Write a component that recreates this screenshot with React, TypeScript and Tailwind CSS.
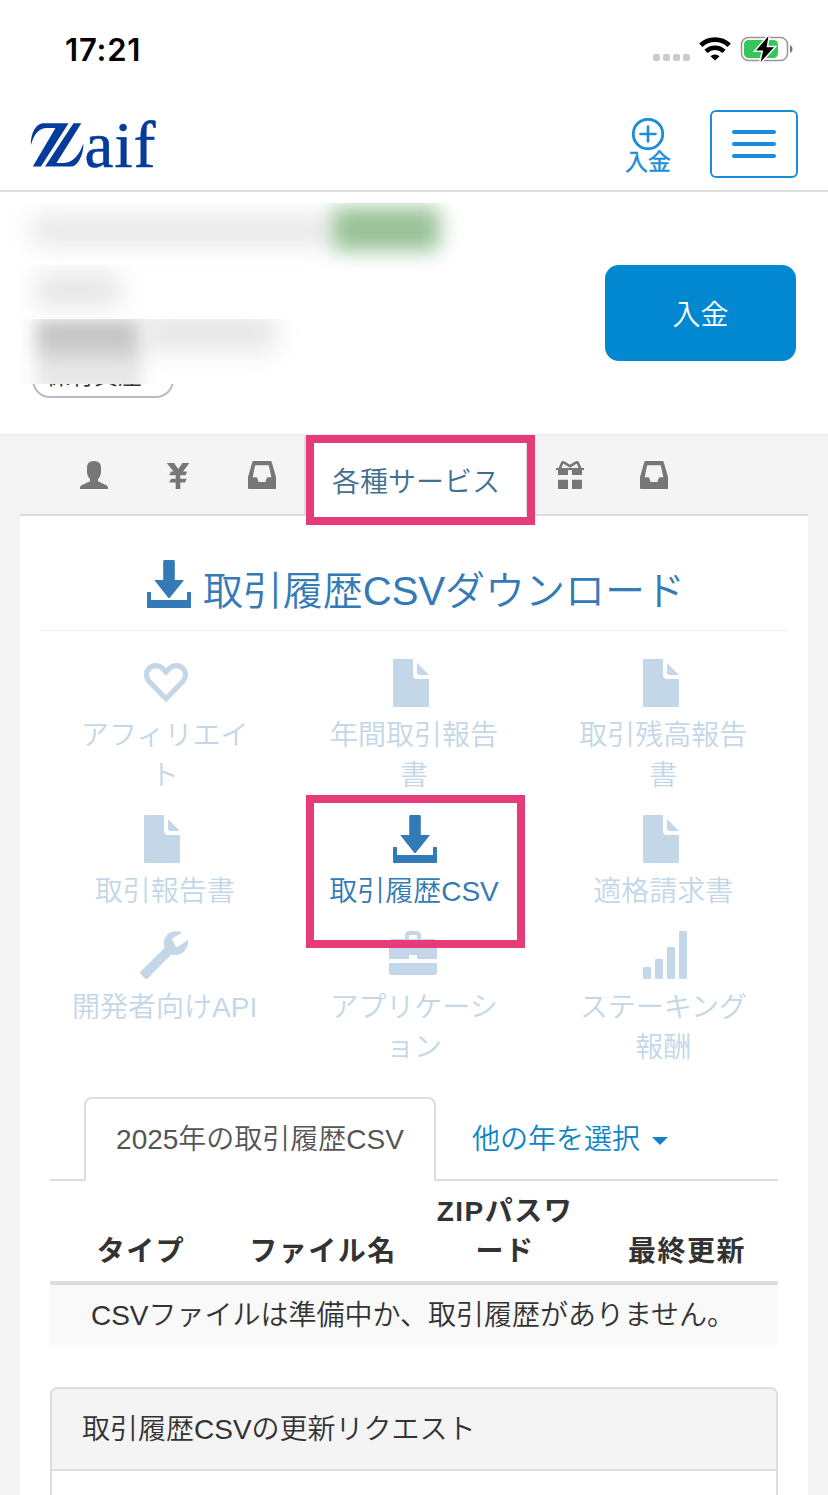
import type { ReactNode } from 'react';
import { clsx } from 'clsx';

interface IconProps {
    className?: string;
}

function UserIcon() {
    return (
        <svg className="size-7" viewBox="0 0 28 28" fill="currentColor">
            <path d="M14 0c4.6 0 7 2.800 7 6.500v4.500c0 2.800-1.400 5.500-3 7v2.200l7.800 3.900c1.600.8 2.200 1.700 2.200 2.900v1H0v-1c0-1.200.6-2.100 2.200-2.900L10 20.200V18c-1.600-1.500-3-4.200-3-7V6.500C7 2.800 9.400 0 14 0z" />
        </svg>
    );
}

function YenIcon() {
    return (
        <svg className="size-7" viewBox="0 0 28 28" fill="currentColor">
            <path d="M2.700 2h7.300l4.200 6L18.500 2h6.800l-6.300 8.500h4.200L21.500 14.300h-5.200v3.500h6.400L21 21.500h-4.700V28h-4.600v-6.500H5.300L7 17.800h4.700v-3.500H5.300L7 10.500h2.500z" />
        </svg>
    );
}

function InboxIcon() {
    return (
        <svg className="size-7" viewBox="0 0 28 28" fill="currentColor" fillRule="evenodd">
            <path d="M5.500 0h17c.6 0 1 .3 1.200.9L28 16v11c0 .6-.4 1-1 1H1c-.6 0-1-.4-1-1V16L4.300.9C4.500.3 4.900 0 5.500 0zM7.800 4.300c-.4 0-.7.3-.8.7L4.700 16.300h3.500c.5 0 .9.3 1.100.8l1 3.200c.1.4.4.7.9.7h5.600c.5 0 .8-.3.9-.7l1-3.200c.2-.5.6-.8 1.100-.8h3.500L21 5c-.1-.4-.4-.7-.8-.7z" />
        </svg>
    );
}

function GiftIcon() {
    return (
        <svg className="size-7" viewBox="0 0 28 28" fill="currentColor">
            <path d="M2 18.700h10V28H3c-.6 0-1-.4-1-1zM16 18.700h10V27c0 .6-.4 1-1 1h-9zM2 8h10v6H2zM16 8h10v6H16z" />
            <path d="M0 8h28" stroke="currentColor" strokeWidth="2" />
            <path d="M3.500 8 6 2.200c.4-.9 1.400-1.100 2.200-.5L14 5.300l5.800-3.600c.8-.6 1.800-.4 2.200.5L24.500 8" fill="none" stroke="currentColor" strokeWidth="2.600" />
        </svg>
    );
}

function DownloadIcon({ className }: IconProps) {
    return (
        <svg className={clsx('size-12', className)} viewBox="0 0 48 48" fill="currentColor">
            <path d="M21.500 0h9c.8 0 1.300.6 1.300 1.300V20h8.400c.5 0 .6.4.3.8L27 37.500c-.5.7-1.500.7-2 0L11.800 20.800c-.3-.4-.2-.8.3-.8h8.100V1.300c0-.7.6-1.300 1.300-1.300z" />
            <path d="M5 32h2c.6 0 1 .4 1 1v7h36v-7c0-.6.4-1 1-1h2c.6 0 1 .4 1 1v14c0 .6-.4 1-1 1H5c-.6 0-1-.4-1-1V33c0-.6.4-1 1-1z" />
        </svg>
    );
}

function FileIcon() {
    return (
        <svg className="size-12" viewBox="0 0 48 48" fill="currentColor">
            <path d="M5 0h19v16c0 2.400 1.600 4 4 4h12v27c0 .6-.4 1-1 1H5c-.6 0-1-.4-1-1V1c0-.6.4-1 1-1z" />
            <path d="M28 4l12 12h-9.500c-1.500 0-2.500-1-2.500-2.500z" />
        </svg>
    );
}

function HeartIcon() {
    return (
        <svg className="size-12" viewBox="0 0 48 48" fill="none" stroke="currentColor" strokeWidth="5.200">
            <path d="M26 39.800 9.300 22.600c-3.500-3.700-3.700-9.300-.5-12.900 3.300-3.800 9.500-4.200 13.200-.8L26 13l4-4.100c3.700-3.400 9.900-3 13.200.8 3.200 3.600 3 9.200-.5 12.900z" />
        </svg>
    );
}

function WrenchIcon() {
    return (
        <svg className="size-12" viewBox="0 0 48 48" fill="currentColor">
            <path d="M42.300 1.600C37 -.8 30.600 0 26.600 4.500c-3.200 3.600-3.600 8.300-2 12.300L.6 40.400c-.8.8-.8 1.700 0 2.500l4.400 4.500c.8.8 1.800.8 2.600 0l23.800-24c4.200 1.300 9 .4 12.300-2.700 3.500-3.400 5-7.500 4.200-11.600L38.300 15.600c-1 .6-2.100.3-2.700-.7l-3.300-5.600c-.5-1-.2-1.800.6-2.300z" />
        </svg>
    );
}

function BriefcaseIcon() {
    return (
        <svg className="size-12" viewBox="0 0 48 48" fill="currentColor">
            <path d="M20 0h8c2.200 0 4 1.800 4 4v4h13c1.700 0 3 1.300 3 3v17H28v-4h-8v4H0V11c0-1.700 1.300-3 3-3h13V4c0-2.200 1.800-4 4-4zm0 5v3h8V5c0-.6-.4-1-1-1h-6c-.6 0-1 .4-1 1zM0 32h48v9c0 1.700-1.300 3-3 3H3c-1.700 0-3-1.300-3-3z" />
        </svg>
    );
}

function SignalIcon() {
    return (
        <svg className="size-12" viewBox="0 0 48 48" fill="currentColor">
            <rect x="4" y="36" width="8" height="12" rx="1" />
            <rect x="16" y="28" width="8" height="20" rx="1" />
            <rect x="28" y="16" width="8" height="32" rx="1" />
            <rect x="40" y="0" width="8" height="48" rx="1" />
        </svg>
    );
}

interface Service {
    icon: ReactNode;
    lines: string[];
    active?: boolean;
}

const services: Service[] = [
    { icon: <HeartIcon />, lines: ['アフィリエイ', 'ト'] },
    { icon: <FileIcon />, lines: ['年間取引報告', '書'] },
    { icon: <FileIcon />, lines: ['取引残高報告', '書'] },
    { icon: <FileIcon />, lines: ['取引報告書'] },
    { icon: <DownloadIcon />, lines: ['取引履歴CSV'], active: true },
    { icon: <FileIcon />, lines: ['適格請求書'] },
    { icon: <WrenchIcon />, lines: ['開発者向けAPI'] },
    { icon: <BriefcaseIcon />, lines: ['アプリケーシ', 'ョン'] },
    { icon: <SignalIcon />, lines: ['ステーキング', '報酬'] },
];

const columns = [['タイプ'], ['ファイル名'], ['ZIPパスワ', 'ード'], ['最終更新']];

function StatusBar() {
    return (
        <div className="flex h-[98px] items-center justify-between pl-[65px] pr-[34px]">
            <span className="font-['Inter',sans-serif] text-[31px] font-semibold leading-none tracking-[0.8px] text-black">
                17:21
            </span>
            <div className="flex items-center">
                <div className="mr-[9px] mt-[17px] flex gap-[3px]">
                    {[0, 1, 2, 3].map((dot) => (
                        <span key={dot} className="size-[7px] rounded-[2px] bg-[#cbcbcb]" />
                    ))}
                </div>
                <svg className="mr-[9px] h-6 w-8" viewBox="0 0 32 24">
                    <path d="M1.800 8.300a20.400 20.400 0 0 1 28.400 0" fill="none" stroke="#000" strokeWidth="4.800" />
                    <path d="M7 14.300a13 13 0 0 1 18 0" fill="none" stroke="#000" strokeWidth="4.600" />
                    <path d="M11.500 19.200a6.500 6.500 0 0 1 9 0L16 23.600z" />
                </svg>
                <svg className="h-[30px] w-[54px]" viewBox="0 0 54 30">
                    <rect x="1.500" y="3.500" width="46" height="23" rx="7" fill="none" stroke="#999" strokeWidth="1.600" />
                    <rect x="4" y="6" width="34" height="18" rx="4.500" fill="#34c759" />
                    <path d="M50 11v8c3.300-1.400 3.300-6.600 0-8z" fill="#777" />
                    <path d="M28.500 2 16 16.500h7.200l-2.600 11.500L34 13.300h-7.400z" fill="#000" stroke="#fff" strokeWidth="3" paintOrder="stroke" />
                </svg>
            </div>
        </div>
    );
}

function Logo() {
    return (
        <svg className="h-[84px] w-[142px]" viewBox="28 102 142 84" fill="#053b9b">
            <path d="M31 145c-.5-11 4.500-21.700 13-21.700h24.500L41 166.500h-8.200L55.500 128H47c-8.500 0-13.500 7-16 17z" />
            <path d="M73.500 123.300h7.800L56.500 163h7C73 163 80 154 83.300 143.500c.7 9.500-5 23-12 23H45z" />
            <text x="84.500" y="166.500" className="font-['Liberation_Serif',serif] text-[65px] tracking-[1.2px]" stroke="#053b9b" strokeWidth="0.6">
                aif
            </text>
        </svg>
    );
}

function Header() {
    return (
        <header className="flex h-[94px] items-center border-b-2 border-[#ddd] pl-7 pr-[30px]">
            <Logo />
            <div className="ml-auto mr-[39px] mt-1 flex flex-col items-center text-[#1a8ddb]">
                <svg className="size-8" viewBox="0 0 32 32" fill="none" stroke="currentColor">
                    <circle cx="16" cy="16" r="14.700" strokeWidth="2.800" />
                    <path d="M16 8.500v15M8.500 16h15" strokeWidth="2.600" strokeLinecap="round" />
                </svg>
                <span className="text-[23px] font-normal leading-6 [-webkit-text-stroke:0.4px]">入金</span>
            </div>
            <button className="flex h-[68px] w-[88px] flex-col items-center justify-center gap-2 rounded-md border-2 border-[#1a8ddb]">
                <span className="h-1 w-11 rounded-full bg-[#1a8ddb]" />
                <span className="h-1 w-11 rounded-full bg-[#1a8ddb]" />
                <span className="h-1 w-11 rounded-full bg-[#1a8ddb]" />
            </button>
        </header>
    );
}

// Account details are masked with blurred blocks
function Account() {
    return (
        <section className="flex h-[242px] items-start justify-between pr-8">
            <div className="pt-[11px]">
                <div className="flex h-[76px] w-[480px] overflow-hidden pl-8">
                    <div className="mt-[13px] h-7 w-[300px] shrink-0 bg-[#e6e6e6] blur-[12px]" />
                    <div className="mt-1 h-[44px] w-[108px] shrink-0 rounded-lg bg-[#98c298] blur-[10px]" />
                </div>
                <div className="-mt-[14px] flex h-[54px] overflow-hidden pl-9 pt-2">
                    <div className="h-[34px] w-[84px] bg-[#e6e6e6] blur-[12px]" />
                </div>
                <div className="flex h-[65px] overflow-hidden pl-9">
                    <div className="h-[78px] w-[106px] shrink-0 bg-linear-to-b from-[#c4c4c4] from-30% to-[#e8e8e8] to-60% blur-[9px]" />
                    <div className="-mt-1 h-9 w-[134px] shrink-0 bg-[#e6e6e6] blur-[12px]" />
                </div>
                <div className="ml-8 flex h-[14px] w-[142px] items-end overflow-hidden">
                    <div className="h-[46px] w-[142px] shrink-0 rounded-[18px] border-2 border-[#bbb] bg-white pl-3 text-2xl font-normal leading-[44px] text-[#333]">
                        保有資産
                    </div>
                </div>
            </div>
            <button className="mt-[73px] h-24 w-[191px] rounded-[14px] bg-[#0288d1] pt-[6px] text-[28px] leading-10 text-white">
                入金
            </button>
        </section>
    );
}

function ServiceTabs() {
    return (
        <nav className="mx-5 flex h-20 items-stretch border-b-2 border-[#ddd] pl-8 text-[#777]">
            <div className="flex w-21 items-center justify-center"><UserIcon /></div>
            <div className="flex w-21 items-center justify-center"><YenIcon /></div>
            <div className="flex w-21 items-center justify-center"><InboxIcon /></div>
            <div className="relative -mb-[2px] flex w-56 items-center justify-center border-x-2 border-[#ddd] bg-white pt-[14px] text-[28px] leading-10 text-[#41708f]">
                各種サービス
                <div className="pointer-events-none absolute -top-px left-0 z-10 h-[90px] w-[229px] border-8 border-[#e53b79]" />
            </div>
            <div className="flex w-21 items-center justify-center"><GiftIcon /></div>
            <div className="flex w-21 items-center justify-center"><InboxIcon /></div>
        </nav>
    );
}

function ServiceItem({ icon, lines, active }: Service) {
    return (
        <div
            className={clsx(
                'relative flex flex-col items-center text-[28px] leading-10',
                active ? 'text-[#337ab7]' : 'text-[#c4d7e8]'
            )}
        >
            <div className="mb-[9px] mr-px">{icon}</div>
            <div className="-mb-px text-center">
                {lines.map((line) => (
                    <div key={line} className="whitespace-nowrap">{line}</div>
                ))}
            </div>
            {active && (
                <div className="absolute -top-5 left-[17px] z-10 h-[153px] w-[219px] border-8 border-[#e53b79]" />
            )}
        </div>
    );
}

function HistoryTable() {
    return (
        <div className="mx-[30px] mt-[11px]">
            <div className="grid grid-cols-4 items-end border-b-4 border-[#ddd] pb-[9px] text-center text-[28px] font-bold leading-10 tracking-[1.500px]">
                {columns.map((lines) => (
                    <div key={lines[0]}>
                        {lines.map((line) => (
                            <div key={line} className="whitespace-nowrap">{line}</div>
                        ))}
                    </div>
                ))}
            </div>
            <div className="flex h-[60px] items-center justify-center whitespace-nowrap bg-[#f9f9f9] pr-[2px] pt-[2px] text-[28px]">
                CSVファイルは準備中か、取引履歴がありません。
            </div>
        </div>
    );
}

export default function App() {
    return (
        <div
            lang="ja"
            className="h-[1495px] w-[828px] overflow-hidden bg-white font-['Liberation_Sans','Noto_Sans_CJK_JP',sans-serif] font-[350] text-[#333]"
        >
            <StatusBar />
            <Header />
            <Account />
            <div className="border-t-2 border-[#eee] bg-[#f4f4f4]">
                <ServiceTabs />
                <main className="mx-5 h-[979px] bg-white">
                    <h1 className="mx-5 flex h-[115px] items-start justify-center border-b border-[#eee] pt-11 text-[40px] leading-[60px] text-[#337ab7]">
                        <DownloadIcon className="mr-3" />
                        <span className="pt-px">取引履歴CSVダウンロード</span>
                    </h1>
                    <div className="mx-5 mt-7 grid grid-cols-3 gap-y-5">
                        {services.map((service) => (
                            <ServiceItem key={service.lines[0]} {...service} />
                        ))}
                    </div>
                    <div className="mx-[30px] mt-[30px] flex h-[84px] items-end border-b-2 border-[#ddd] pl-[34px] text-[28px] leading-10">
                        <div className="-mb-[2px] flex h-[84px] w-[352px] items-center justify-center rounded-t-lg border-2 border-b-0 border-[#ddd] bg-white text-[#555]">
                            2025年の取引履歴CSV
                        </div>
                        <div className="flex h-[84px] items-center pl-9 pt-[6px] text-[#0e84c8]">
                            他の年を選択
                            <span className="ml-3 mt-[2px] border-x-8 border-t-8 border-x-transparent border-t-[#0e84c8]" />
                        </div>
                    </div>
                    <HistoryTable />
                    <div className="mx-[30px] mt-[42px] h-[200px] rounded-lg border-2 border-[#ddd]">
                        <div className="flex h-[82px] items-center rounded-t-md border-b-2 border-[#ddd] bg-[#f4f4f4] pl-[30px] pt-[2px] text-[28px]">
                            取引履歴CSVの更新リクエスト
                        </div>
                    </div>
                </main>
            </div>
        </div>
    );
}
